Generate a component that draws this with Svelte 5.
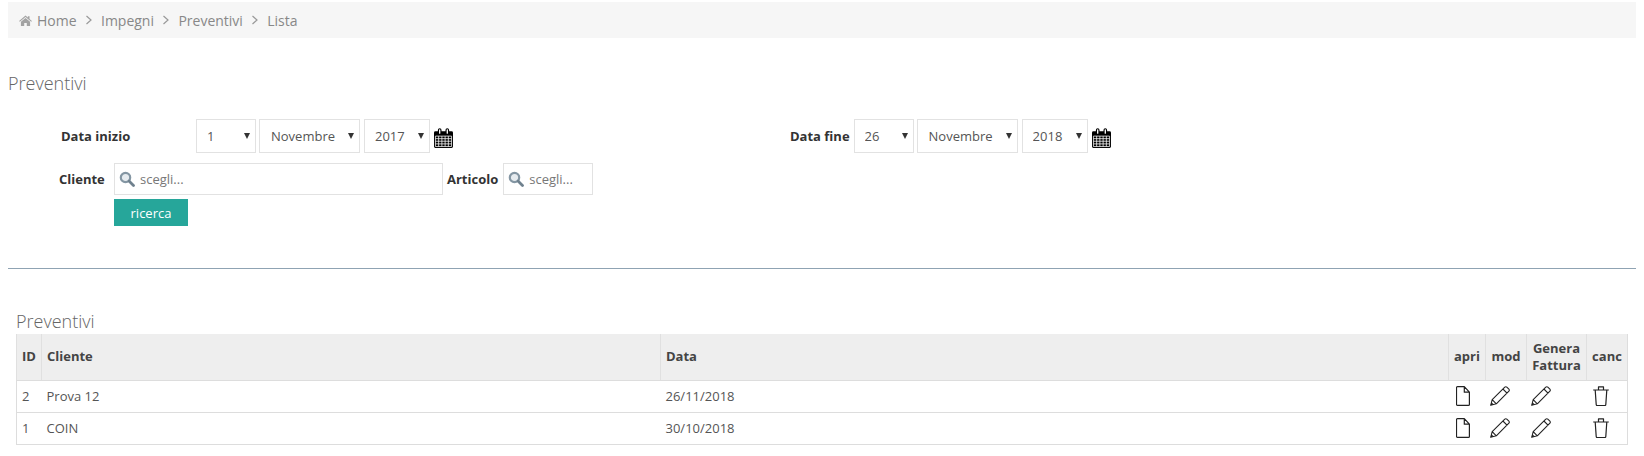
<script>
  const crumbs = ['Impegni', 'Preventivi', 'Lista'];
  const rows = [
    { id: 2, cliente: 'Prova 12', data: '26/11/2018' },
    { id: 1, cliente: 'COIN', data: '30/10/2018' },
  ];
  const MONTHS = ['Ottobre', 'Novembre', 'Dicembre'];
</script>

{#snippet calendar()}
  <svg class="cal" viewBox="0 0 20 21" aria-hidden="true">
    <path fill="#000" d="M1.500 3.500h2.600V2.200a1.900 1.900 0 0 1 3.800 0v1.300h4.200V2.200a1.900 1.900 0 0 1 3.800 0v1.300h2.600A1.500 1.500 0 0 1 20 5v14.500a1.500 1.500 0 0 1-1.500 1.500h-17A1.500 1.500 0 0 1 0 19.500V5a1.500 1.500 0 0 1 1.500-1.500z" />
    <path fill="#fff" d="M5.300 2.100a.7.700 0 0 1 1.400 0v3.300a.7.700 0 0 1-1.400 0zM13.300 2.100a.7.700 0 0 1 1.400 0v3.300a.7.700 0 0 1-1.400 0z" />
    <path fill="none" stroke="#fff" stroke-width=".8" d="M1.500 8.500h17v11h-17zM1.500 11.200h17M1.500 13.900h17M1.500 16.700h17M4.900 8.500v11M8.300 8.500v11M11.700 8.500v11M15.100 8.500v11" />
  </svg>
{/snippet}

{#snippet dropdown(value, options, cls)}
  <span class="sel {cls}">
    <select {value}>
      {#each options as o}<option>{o}</option>{/each}
    </select>
  </span>
{/snippet}

{#snippet search()}
  <svg class="lens" viewBox="0 0 16 16" aria-hidden="true">
    <circle cx="6.500" cy="6.500" r="4.700" fill="#e6ebef" stroke="#8496a3" stroke-width="2.200" />
    <path d="M10 10l4.500 4.500" stroke="#6f818e" stroke-width="2.800" stroke-linecap="round" />
  </svg>
{/snippet}

{#snippet fileIcon()}
  <svg class="ico file" viewBox="0 0 14 20" aria-hidden="true">
    <path d="M1.500.6h6.800l5.100 5.600v12.200a1 1 0 0 1-1 1H1.500a1 1 0 0 1-1-1V1.600a1 1 0 0 1 1-1zM8.300.6v5.600h5.100" fill="none" stroke="#222" stroke-width="1.200" stroke-linejoin="round" />
  </svg>
{/snippet}

{#snippet pencil()}
  <svg class="ico pen" viewBox="0 0 20 20" aria-hidden="true">
    <path d="M.7 19.300l1.500-5.600L14.800 1.100a1.400 1.400 0 0 1 2 0l2.100 2.100a1.400 1.400 0 0 1 0 2L6.300 17.800zM2.200 13.700l4.100 4.100M12.900 3l4.100 4.100" fill="none" stroke="#222" stroke-width="1.100" stroke-linejoin="round" />
    <path d="M.7 19.300l.8-3 2.200 2.200z" fill="#222" />
  </svg>
{/snippet}

{#snippet trash()}
  <svg class="ico bin" viewBox="0 0 16 20" aria-hidden="true">
    <path d="M.2 4h15.600M5.500 4V.8h5V4M2.200 4l1 14.500a1 1 0 0 0 1 1h7.600a1 1 0 0 0 1-1l1-14.500" fill="none" stroke="#222" stroke-width="1.200" stroke-linejoin="round" />
  </svg>
{/snippet}

<div class="page">
  <nav class="breadcrumb">
    <svg class="home" viewBox="0 0 14 12" aria-hidden="true">
      <path fill="#a3a3a3" d="M7 .6l2.600 2.200V1.400h1.800v2.900L14 6.500l-.8.900L7 2.200.8 7.400 0 6.500zM2 7.300L7 3.200l5 4.100V12H8.400V8.700H5.600V12H2z" />
    </svg>
    <span>Home</span>
    {#each crumbs as c}
      <svg class="chev" viewBox="0 0 8 10" aria-hidden="true"><path d="M1.500 1l4.500 4-4.500 4" fill="none" stroke="#999" stroke-width="1.200" /></svg>
      <span>{c}</span>
    {/each}
  </nav>

  <h2 class="title">Preventivi</h2>

  <form class="filters">
    <div class="dates">
      <div class="date-group start">
        <span class="lbl inizio">Data inizio</span>
        {@render dropdown('1', ['1', '2', '3'], 'day')}
        {@render dropdown('Novembre', MONTHS, 'month')}
        {@render dropdown('2017', ['2017', '2018'], 'year')}
        {@render calendar()}
      </div>
      <div class="date-group end">
        <span class="lbl">Data fine</span>
        {@render dropdown('26', ['25', '26', '27'], 'day')}
        {@render dropdown('Novembre', MONTHS, 'month')}
        {@render dropdown('2018', ['2017', '2018'], 'year')}
        {@render calendar()}
      </div>
    </div>
    <div class="pickers">
      <span class="lbl cliente">Cliente</span>
      <div class="picker wide">{@render search()}<span>scegli...</span></div>
      <span class="lbl articolo">Articolo</span>
      <div class="picker narrow">{@render search()}<span>scegli...</span></div>
    </div>
    <button type="button" class="btn">ricerca</button>
  </form>

  <hr class="rule" />

  <section class="list">
    <h3 class="list-title">Preventivi</h3>
    <table>
      <thead>
        <tr>
          <th class="c-id">ID</th>
          <th class="c-cli">Cliente</th>
          <th class="c-data">Data</th>
          <th class="c-a act">apri</th>
          <th class="c-m act">mod</th>
          <th class="c-g act">Genera Fattura</th>
          <th class="c-c act">canc</th>
        </tr>
      </thead>
      <tbody>
        {#each rows as r}
          <tr>
            <td>{r.id}</td>
            <td>{r.cliente}</td>
            <td>{r.data}</td>
            <td class="act">{@render fileIcon()}</td>
            <td class="act">{@render pencil()}</td>
            <td class="act">{@render pencil()}</td>
            <td class="act">{@render trash()}</td>
          </tr>
        {/each}
      </tbody>
    </table>
  </section>
</div>

<style>
  :global(body) {
    margin: 0;
    background: #fff;
    font-family: "Open Sans", "Liberation Sans", sans-serif;
    font-size: 13px;
    color: #555;
  }
  .page { padding: 2px 8px 0; height: 454px; overflow: hidden; }

  .breadcrumb {
    height: 36px;
    background: #f6f6f6;
    display: flex;
    align-items: center;
    padding-left: 11px;
    font-size: 14px;
    color: #888;
  }
  .home { width: 13px; height: 11px; margin-right: 5px; }
  .chev { width: 8px; height: 10px; margin: 0 8px 0 8.4px; }

  .title {
    margin: 33px 0 0;
    font-size: 18px;
    font-weight: 300;
    line-height: 24px;
    color: #666;
  }

  .filters { margin-top: 24px; }
  .dates { display: flex; height: 34px; }
  .date-group { display: flex; align-items: center; }
  .date-group.start { width: 782px; }
  .lbl { font-weight: 700; color: #333; font-size: 13px; }
  .inizio { margin-left: 53px; width: 135px; }
  .end .lbl { margin-right: 4px; }

  .sel { display: block; position: relative; margin-right: 4px; }
  .sel::after {
    content: "";
    position: absolute;
    right: 6px;
    top: 14px;
    border: 3px solid transparent;
    border-top: 6px solid #333;
    border-bottom: 0;
    pointer-events: none;
  }
  .sel select {
    appearance: none;
    display: block;
    box-sizing: border-box;
    width: 100%;
    height: 34px;
    border: 1px solid #e2e2e2;
    background: #fff;
    border-radius: 0;
    padding: 0 0 0 10px;
    font: 13px "Open Sans", sans-serif;
    color: #555;
  }
  .day { width: 60px; margin-right: 3px; }
  .month { width: 101px; }
  .month select { padding-left: 11px; }
  .year { width: 66px; }
  .cal { width: 19px; height: 20px; margin-top: 4px; }

  .pickers { display: flex; align-items: center; margin-top: 10px; height: 32px; }
  .cliente { margin-left: 51px; width: 55px; }
  .articolo { margin: 0 5px 0 4px; }
  .picker {
    box-sizing: border-box;
    height: 32px;
    border: 1px solid #e2e2e2;
    display: flex;
    align-items: center;
    padding-left: 4px;
    color: #777;
  }
  .wide { width: 329px; }
  .narrow { width: 90px; }
  .lens { width: 16px; height: 16px; margin-right: 5px; }

  .btn {
    display: block;
    margin: 4px 0 0 106px;
    width: 74px;
    height: 27px;
    padding: 0;
    border: 0;
    background: #26a69a;
    color: #fff;
    font: 13px "Open Sans", sans-serif;
  }

  .rule { margin: 42px 0 0; border: 0; border-top: 1px solid #8fa3b3; }

  .list { margin: 40px 8px 0; }
  .list-title {
    margin: 0 0 1px;
    font-size: 18px;
    font-weight: 300;
    line-height: 24px;
    color: #666;
  }
  table {
    border-collapse: collapse;
    table-layout: fixed;
    width: 1612px;
    border-left: 1px solid #ddd;
    border-right: 1px solid #ddd;
  }
  th {
    background: #eee;
    height: 46px;
    padding: 0 5px;
    box-sizing: border-box;
    border-left: 1px solid #e0e0e0;
    border-bottom: 1px solid #ddd;
    font-weight: 700;
    font-size: 13px;
    line-height: 17px;
    color: #444;
    text-align: left;
  }
  th.act { text-align: center; padding: 0 2px; }
  td {
    height: 32px;
    padding: 0 5px;
    box-sizing: border-box;
    border-bottom: 1px solid #ddd;
    font-size: 13px;
    color: #555;
  }
  td.act { padding: 0 0 0 4px; }
  .c-id { width: 25px; }
  .c-data { width: 788px; }
  .c-a { width: 37px; }
  .c-m { width: 41px; }
  .c-g { width: 60px; }
  .c-c { width: 41px; }
  .ico { display: block; height: 20px; }
  .ico.file { width: 14px; margin-left: 3px; }
  .ico.pen { width: 20px; }
  .ico.bin { width: 16px; margin-left: 2px; }
</style>
